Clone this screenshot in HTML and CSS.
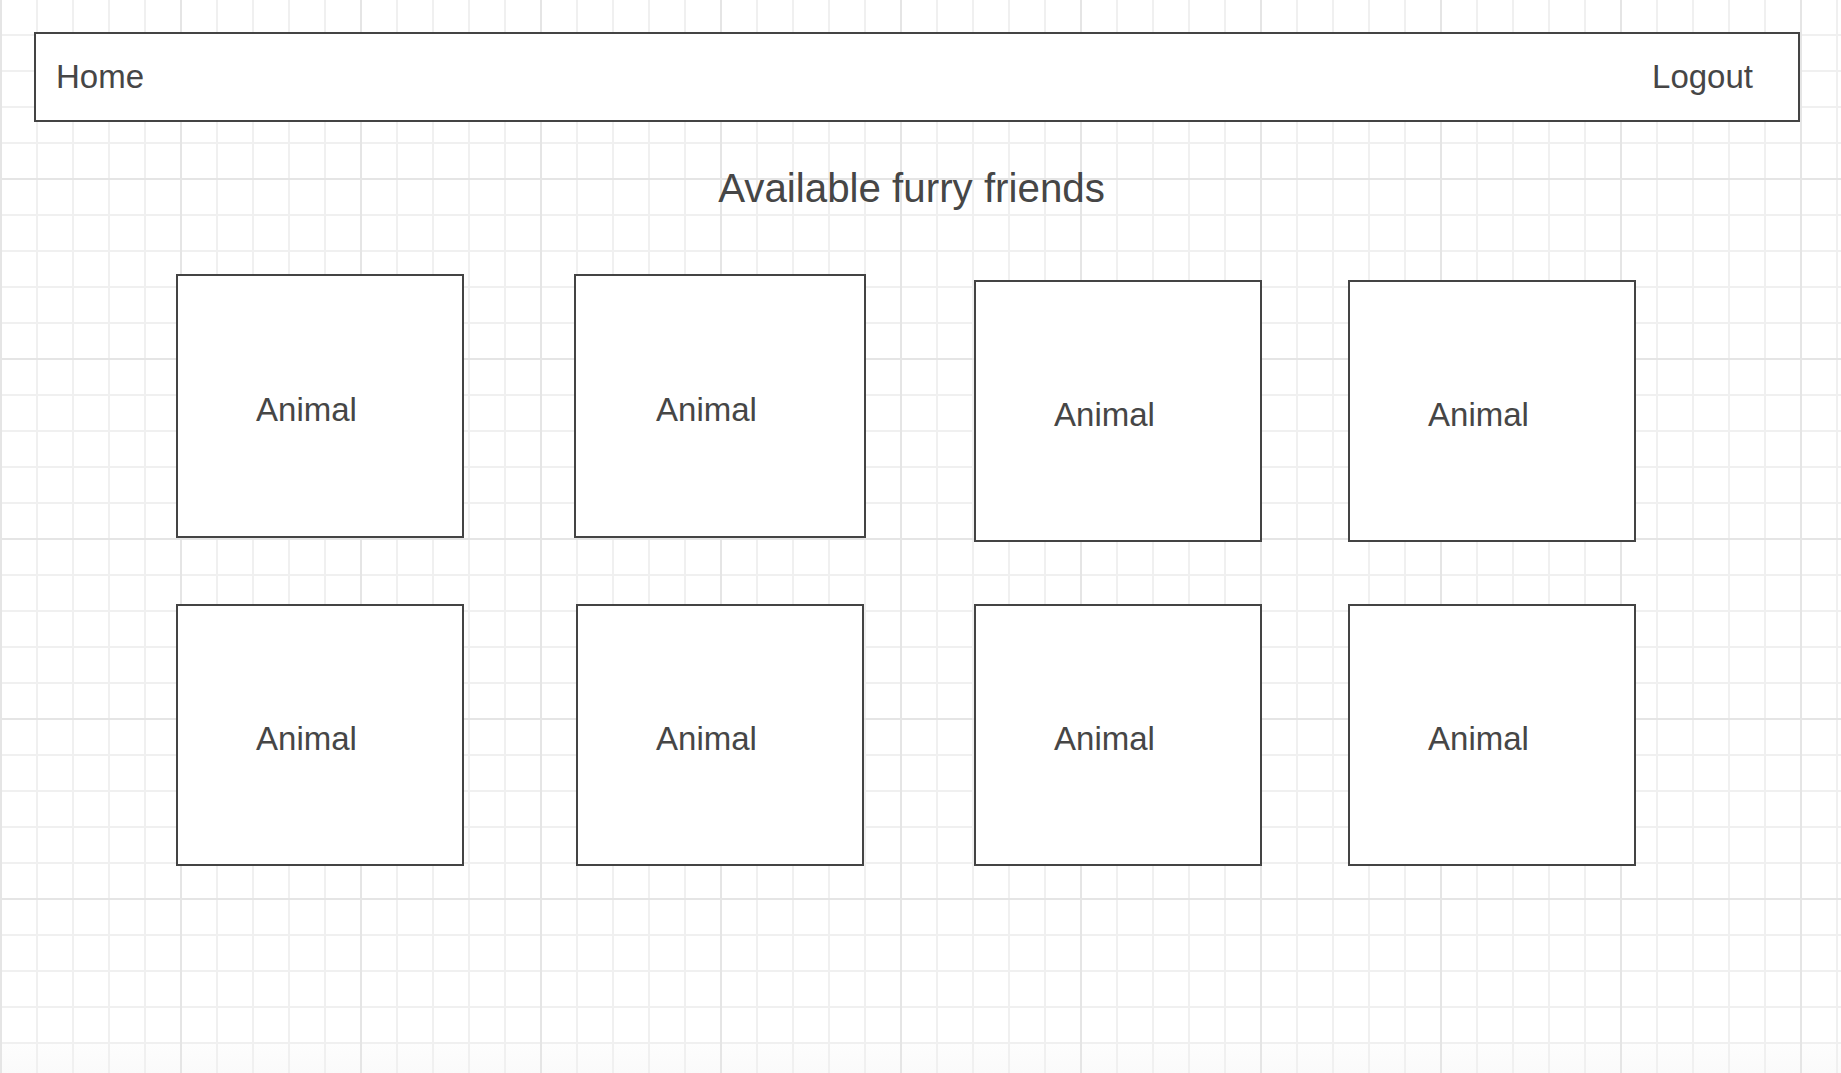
FILE: index.html
```html
<!DOCTYPE html>
<html lang="en">
<head>
<meta charset="utf-8">
<title>Available furry friends</title>
<link rel="stylesheet" href="styles.css">
</head>
<body>
<div class="canvas">
  <nav class="navbar">
    <span class="nav-link">Home</span>
    <span class="nav-link">Logout</span>
  </nav>
  <h1 class="title">Available furry friends</h1>
  <div class="row row-top">
    <div class="card card-tall">Animal</div>
    <div class="card card-tall card-wide gap-110">Animal</div>
    <div class="card card-drop gap-108">Animal</div>
    <div class="card card-drop gap-86">Animal</div>
  </div>
  <div class="row row-bottom">
    <div class="card">Animal</div>
    <div class="card gap-112">Animal</div>
    <div class="card gap-110">Animal</div>
    <div class="card gap-86">Animal</div>
  </div>
</div>
</body>
</html>
```

FILE: styles.css
```css
* {
  box-sizing: border-box;
}

html,
body {
  margin: 0;
  padding: 0;
}

body {
  font-family: "Liberation Sans", Arial, Helvetica, sans-serif;
  color: #464646;
}

.canvas {
  min-height: 1073px;
  padding-top: 32px;
  background-color: #ffffff;
  background-image:
    linear-gradient(to right, #e5e5e5 0, #e5e5e5 2px, transparent 2px),
    linear-gradient(to bottom, #e5e5e5 0, #e5e5e5 2px, transparent 2px),
    linear-gradient(to right, #f0f0f0 0, #f0f0f0 2px, transparent 2px),
    linear-gradient(to bottom, #f0f0f0 0, #f0f0f0 2px, transparent 2px),
    linear-gradient(to bottom, #ffffff 0, #ffffff 1043px, #fdfdfd 1043px, #fafafa 100%);
  background-size: 180px 180px, 180px 180px, 36px 36px, 36px 36px, 100% 100%;
  background-position: 0 0, 0 -2px, 0 0, 0 -2px, 0 0;
  background-repeat: repeat, repeat, repeat, repeat, no-repeat;
}

.navbar {
  margin: 0 41px 0 34px;
  height: 90px;
  border: 2px solid #444444;
  background: #ffffff;
  display: flex;
  align-items: center;
  justify-content: space-between;
  padding: 0 45px 0 20px;
  font-size: 33px;
  line-height: 38px;
}

.title {
  margin: 44px 0 0;
  padding-right: 18px;
  text-align: center;
  font-size: 40.3px;
  line-height: 46px;
  font-weight: normal;
}

.row {
  display: flex;
  align-items: flex-start;
  padding-left: 176px;
}

.row-top {
  margin-top: 62px;
}

.row-bottom {
  margin-top: 62px;
}

.card {
  width: 288px;
  height: 262px;
  border: 2px solid #444444;
  background: #ffffff;
  display: flex;
  align-items: center;
  justify-content: center;
  padding: 7px 27px 0 0;
  font-size: 33px;
  line-height: 38px;
}

.card-tall {
  height: 264px;
}

.card-wide {
  width: 292px;
}

.card-drop {
  margin-top: 6px;
}

.gap-86 {
  margin-left: 86px;
}

.gap-108 {
  margin-left: 108px;
}

.gap-110 {
  margin-left: 110px;
}

.gap-112 {
  margin-left: 112px;
}
```
